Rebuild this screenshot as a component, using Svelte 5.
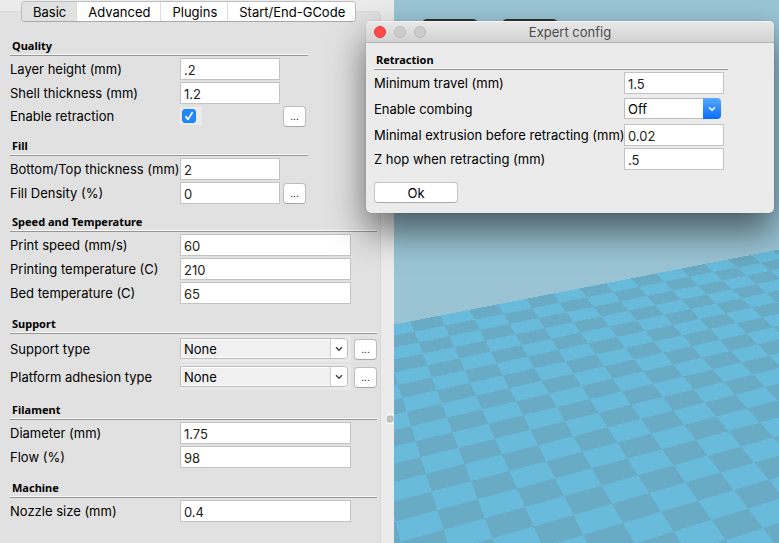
<script>
  const tabs = ['Basic', 'Advanced', 'Plugins', 'Start/End-GCode'];
  let activeTab = $state('Basic');

  const groups = $state([
    {
      title: 'Quality',
      narrow: true,
      fields: [
        { id: 'layer-height', label: 'Layer height (mm)', value: '.2' },
        { id: 'shell', label: 'Shell thickness (mm)', value: '1.2' },
        { id: 'retraction', label: 'Enable retraction', kind: 'check', value: true, more: true }
      ]
    },
    {
      title: 'Fill',
      narrow: true,
      fields: [
        { id: 'bottom-top', label: 'Bottom/Top thickness (mm)', value: '2' },
        { id: 'density', label: 'Fill Density (%)', value: '0', more: true }
      ]
    },
    {
      title: 'Speed and Temperature',
      fields: [
        { id: 'speed', label: 'Print speed (mm/s)', value: '60' },
        { id: 'temp', label: 'Printing temperature (C)', value: '210' },
        { id: 'bed', label: 'Bed temperature (C)', value: '65' }
      ]
    },
    {
      title: 'Support',
      fields: [
        { id: 'support', label: 'Support type', kind: 'select', value: 'None', more: true },
        { id: 'adhesion', label: 'Platform adhesion type', kind: 'select', value: 'None', more: true }
      ]
    },
    {
      title: 'Filament',
      fields: [
        { id: 'diameter', label: 'Diameter (mm)', value: '1.75' },
        { id: 'flow', label: 'Flow (%)', value: '98' }
      ]
    },
    {
      title: 'Machine',
      fields: [{ id: 'nozzle', label: 'Nozzle size (mm)', value: '0.4' }]
    }
  ]);

  const expert = $state([
    { id: 'min-travel', label: 'Minimum travel (mm)', value: '1.5' },
    { id: 'combing', label: 'Enable combing', kind: 'select', value: 'Off' },
    { id: 'min-extrusion', label: 'Minimal extrusion before retracting (mm)', value: '0.02' },
    { id: 'z-hop', label: 'Z hop when retracting (mm)', value: '.5' }
  ]);

  // Perspective projection of a build-plate grid corner onto the view.
  function project(i, j) {
    const w = 1 + 0.0118 * i - 0.0201 * j;
    const x = (62 + 91.3 * i + 10.2 * j) / w;
    const y = (274 - 14.41 * i + 24.81 * j) / w;
    return `${((x - 12) / 3).toFixed(2)} ${(y / 3 + 230).toFixed(2)}`;
  }

  function cell(i, j, w = 1, h = 1) {
    return `M${project(i, j)}L${project(i + w, j)}L${project(i + w, j + h)}L${project(i, j + h)}Z`;
  }

  const first = -14;
  const columns = 60;
  const rows = 34;
  const plate = cell(first, 0, columns, rows);
  let darkCells = '';
  for (let i = first; i < first + columns; i++) {
    for (let j = 0; j < rows; j++) {
      if ((i + j) % 2 === 0) darkCells += cell(i, j);
    }
  }
</script>

{#snippet control(field)}
  {#if field.kind === 'check'}
    <span class="tick">
      <input id={field.id} type="checkbox" bind:checked={field.value} />
      <svg viewBox="0 0 14 14" aria-hidden="true"><path d="M3.8 7.6 6 10.4 10.2 3.6" /></svg>
    </span>
  {:else if field.kind === 'select'}
    <span class="pick">
      <select id={field.id} bind:value={field.value}>
        <option>{field.value}</option>
      </select>
      <span class="arrow">
        <svg viewBox="0 0 8 6" aria-hidden="true"><path d="M1 1.2 4 4.2 7 1.2" /></svg>
      </span>
    </span>
  {:else}
    <input class="text" id={field.id} type="text" bind:value={field.value} />
  {/if}
{/snippet}

<main>
  <aside>
    <nav aria-label="Settings">
      {#each tabs as tab}
        <button class:active={tab === activeTab} onclick={() => (activeTab = tab)}>{tab}</button>
      {/each}
    </nav>
    <div class="box">
      {#each groups as group}
        <section class:narrow={group.narrow}>
          <h2>{group.title}</h2>
          {#each group.fields as field}
            <div class="row {field.kind ?? ''}">
              <label for={field.id}>{field.label}</label>
              <div class="control">{@render control(field)}</div>
              {#if field.more}
                <button class="more" aria-label="{field.label} settings">...</button>
              {/if}
            </div>
          {/each}
        </section>
      {/each}
    </div>
  </aside>
  <div class="splitter"><i></i></div>

  <div class="viewer">
    <svg class="scene" aria-hidden="true">
      <path d={plate} fill="#69bbdb" />
      <path d={darkCells} fill="#69aac4" />
    </svg>
    <div class="tools" aria-hidden="true"><span></span><span></span></div>
  </div>

  <div class="dialog" role="dialog" aria-labelledby="dialog-title">
    <header>
      <div class="lights">
        <button class="close" aria-label="Close"></button>
        <button aria-label="Minimize" disabled></button>
        <button aria-label="Zoom" disabled></button>
      </div>
      <h1 id="dialog-title">Expert config</h1>
    </header>
    <form onsubmit={(e) => e.preventDefault()}>
      <h2>Retraction</h2>
      {#each expert as field}
        <div class="row {field.kind ?? ''}">
          <label for={field.id}>{field.label}</label>
          <div class="control">{@render control(field)}</div>
        </div>
      {/each}
      <button class="ok">Ok</button>
    </form>
  </div>
</main>

<style>
  :global(body) {
    margin: 0;
  }
  main {
    position: relative;
    display: flex;
    height: 100vh;
    overflow: hidden;
    background: #ebebeb;
    color: #000;
    font: 13px/16px Inter, 'Liberation Sans', sans-serif;
  }
  button,
  input,
  select {
    box-sizing: border-box;
    margin: 0;
    padding: 0;
    font: inherit;
    color: inherit;
  }

  aside {
    display: flex;
    flex-direction: column;
    flex: 0 0 381px;
  }
  nav {
    display: flex;
    position: relative;
    align-self: flex-start;
    margin: 1px 0 0 21px;
    border: 1px solid #bdbdbd;
    border-bottom-color: #a9a9a9;
    border-radius: 4px;
    background: #fff;
    overflow: hidden;
  }
  nav button {
    height: 19px;
    padding: 0 10px 0 11px;
    border: 0;
    border-left: 1px solid #dcdcdc;
    background: #fff;
  }
  nav button:first-child {
    border-left: 0;
  }
  nav button.active {
    background: #e1e1e1;
  }
  .box {
    flex: 1;
    box-sizing: border-box;
    margin-top: -11px;
    padding: 26px 3px 0 10px;
    border: 1px solid #d8d8d8;
    border-width: 1px 1px 0 0;
    border-radius: 0 5px 0 0;
    background: #e1e1e1;
  }
  section {
    margin-bottom: 12px;
  }
  .narrow {
    width: 298px;
    margin-bottom: 10px;
  }
  h2 {
    box-sizing: border-box;
    height: 18px;
    margin: 0 0 2px;
    padding-left: 2px;
    border-bottom: 1px solid #969696;
    box-shadow: inset 0 -1px #f8f8f8;
    font: bold 11px/15px 'Noto Sans', 'Open Sans', sans-serif;
    color: #000;
  }
  .row {
    display: flex;
    align-items: center;
    height: 22px;
    margin-bottom: 2px;
  }
  .row:last-child {
    margin-bottom: 0;
  }
  .row.select {
    height: 26px;
  }
  .row.check {
    height: 20px;
    padding-bottom: 2px;
  }
  label {
    flex: 0 0 170px;
    min-width: 0;
    white-space: nowrap;
  }
  .control {
    display: flex;
    flex: 0 0 171px;
  }
  .narrow .control {
    flex-basis: 100px;
  }
  .text {
    width: 100%;
    height: 22px;
    padding: 2px 3px 0;
    border: 1px solid #c3c3c3;
    border-radius: 0;
    background: #fff;
    color: #222;
    outline: 0;
  }
  .more {
    width: 23px;
    height: 21px;
    margin-left: 3px;
    border: 1px solid #bdbdbd;
    border-bottom-color: #a6a6a6;
    border-radius: 4px;
    background: #fff;
    font-size: 10px;
    line-height: 14px;
  }
  .tick {
    position: relative;
    padding: 2px 6px 2px 2px;
    background: #ebebeb;
  }
  .tick input {
    display: block;
    width: 14px;
    height: 14px;
    appearance: none;
    border: 1px solid #b5b5b5;
    border-radius: 3px;
    background: #fff;
  }
  .tick input:checked {
    border-color: #1a80f5;
    background: #2389fb;
  }
  .tick svg {
    position: absolute;
    top: 2px;
    left: 2px;
    width: 14px;
    height: 14px;
    pointer-events: none;
  }
  .tick path {
    fill: none;
    stroke: #fff;
    stroke-width: 1.7;
    stroke-linecap: round;
    stroke-linejoin: round;
  }

  .pick {
    display: flex;
    position: relative;
    flex: 1;
    padding: 2px 3px 3px 0;
    background: #e9e9e9;
  }
  .pick select {
    width: 100%;
    height: 21px;
    padding: 0 20px 0 3px;
    appearance: none;
    border: 1px solid #bcbcbc;
    border-radius: 0 4px 4px 0;
    background: #f0f0f0;
    box-shadow: inset 0 0 0 1px #fff;
    outline: 0;
  }
  .arrow {
    position: absolute;
    top: 3px;
    right: 4px;
    display: grid;
    place-items: center;
    width: 16px;
    height: 19px;
    border-left: 1px solid #d0d0d0;
    border-radius: 0 3px 3px 0;
    background: #fff;
    pointer-events: none;
  }
  .arrow svg {
    width: 8px;
    height: 6px;
  }
  .arrow path {
    fill: none;
    stroke: #444;
    stroke-width: 1.5;
  }

  .splitter {
    display: flex;
    flex: 0 0 13px;
    justify-content: flex-end;
    padding-top: 414px;
    box-sizing: border-box;
  }
  .splitter i {
    box-sizing: border-box;
    width: 7px;
    height: 10px;
    border: solid #fff;
    border-width: 1px 0;
    background: radial-gradient(circle at 3px 4px, #c4c4c4 2px, #b4b4b4 3px, transparent 4px);
  }

  .viewer {
    position: relative;
    flex: 1;
    min-width: 0;
    overflow: hidden;
    background: #9ac4d4;
  }
  .scene {
    display: block;
    width: 100%;
    height: 100%;
    shape-rendering: crispEdges;
  }
  .tools {
    position: absolute;
    top: 19px;
    left: 28px;
    display: flex;
    gap: 24px;
  }
  .tools span {
    width: 56px;
    height: 56px;
    border-radius: 5px;
    background: #333;
  }

  .dialog {
    position: absolute;
    top: 21px;
    left: 366px;
    width: 408px;
    border-radius: 5px;
    background: #ebebeb;
    box-shadow:
      0 0 1px rgba(0, 0, 0, 0.45),
      0 18px 36px rgba(0, 0, 0, 0.55);
  }
  header {
    display: flex;
    align-items: center;
    box-sizing: border-box;
    height: 22px;
    padding: 0 8px;
    border-bottom: 1px solid #b3b3b3;
    border-radius: 5px 5px 0 0;
    background: linear-gradient(#e9e9e9, #d2d2d2);
    box-shadow: inset 0 1px #f4f4f4;
  }
  .lights {
    display: flex;
    flex: 0 0 52px;
    gap: 8px;
  }
  .lights button {
    width: 12px;
    height: 12px;
    border: 1px solid #b8b8b8;
    border-radius: 50%;
    background: #cdcdcd;
  }
  .lights .close {
    border-color: #e2383a;
    background: #ff4848;
  }
  h1 {
    flex: 1;
    margin: 0 52px 0 0;
    font-size: 13px;
    font-weight: 400;
    text-align: center;
    color: #4c4c4c;
  }
  form {
    padding: 9px 46px 10px 8px;
  }
  .dialog label {
    flex-basis: 250px;
  }
  .dialog .control {
    flex-basis: 100px;
  }
  .dialog .pick {
    background: none;
  }
  .dialog .pick select {
    background: #fff;
  }
  .dialog .arrow {
    top: 2px;
    right: 3px;
    width: 18px;
    height: 21px;
    border: 0;
    border-radius: 0 4px 4px 0;
    background: linear-gradient(#58aafc, #0a6bff);
  }
  .dialog .arrow path {
    stroke: #fff;
  }
  .ok {
    display: block;
    width: 84px;
    height: 21px;
    margin-top: 12px;
    border: 1px solid #c4c4c4;
    border-bottom-color: #a9a9a9;
    border-radius: 4px;
    background: #fff;
  }
</style>
